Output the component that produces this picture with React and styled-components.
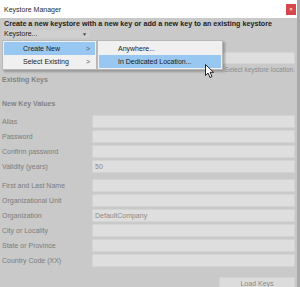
import React from "react";
import styled, { createGlobalStyle } from "styled-components";

const GlobalStyle = createGlobalStyle`
  html, body {
    margin: 0;
    padding: 0;
    background: #c9c9c9;
  }
  body {
    font-family: "Liberation Sans", Arial, sans-serif;
    font-size: 7px;
  }
`;

const Window = styled.div`
  position: relative;
  width: 297px;
  height: 287px;
  overflow: hidden;
  background: #c9c9c9;
  border-right: 3px solid #a9a9a9;
  display: flex;
  flex-direction: column;
`;

const TitleBar = styled.div`
  height: 18px;
  flex: none;
  background: #ffffff;
  display: flex;
  align-items: center;
  justify-content: space-between;
  padding: 0 1px 0 4px;
  color: #2b2b2b;
  font-size: 7px;
`;

const CloseButton = styled.div`
  width: 10px;
  height: 11px;
  background: #d5474b;
  color: #ffffff;
  font-size: 6px;
  display: flex;
  align-items: center;
  justify-content: center;
`;

const Content = styled.div`
  display: flex;
  flex-direction: column;
  padding: 0 2px;
`;

const Heading = styled.div`
  line-height: 12px;
  font-size: 7.2px;
  font-weight: bold;
  color: #1c1c1c;
  padding-left: 2px;
  white-space: nowrap;
`;

const Dropdown = styled.div`
  width: 88px;
  height: 8px;
  line-height: 8px;
  background: #cfcfcf;
  color: #222;
  display: flex;
  justify-content: space-between;
  padding: 0 3px 0 2px;
  box-sizing: border-box;
`;

const Arrow = styled.span`
  font-size: 5px;
  color: #444;
`;

const Grid = styled.div`
  display: grid;
  grid-template-columns: 90px 1fr;
  row-gap: 2px;
  margin-top: ${(p) => p.$top || 0}px;
`;

const Label = styled.div`
  color: #7c7c7c;
  display: flex;
  align-items: center;
  white-space: nowrap;
`;

const Field = styled.div`
  height: ${(p) => p.$h || 13}px;
  background: #dedede;
  border: 1px solid #d3d3d3;
  border-radius: 1px;
  box-sizing: border-box;
  color: #8a8a8a;
  padding-left: 2px;
  display: flex;
  align-items: center;
`;

const Spacer = styled.div`
  grid-column: 1 / -1;
  height: ${(p) => p.$h}px;
`;

const HelpText = styled.div`
  text-align: right;
  font-size: 6.5px;
  line-height: 11px;
  color: #8c8c8c;
`;

const Section = styled.div`
  font-weight: bold;
  color: #828282;
  line-height: 10px;
  margin-top: ${(p) => p.$top || 0}px;
`;

const Footer = styled.div`
  display: flex;
  justify-content: flex-end;
  margin-top: 10px;
`;

const Button = styled.div`
  width: 76px;
  height: 12px;
  background: #dcdcdc;
  border: 1px solid #d3d3d3;
  box-sizing: border-box;
  color: #8a8a8a;
  display: flex;
  align-items: center;
  justify-content: center;
`;

const Menu = styled.div`
  position: absolute;
  top: 40px;
  left: ${(p) => p.$left}px;
  width: ${(p) => p.$width}px;
  padding: 1px;
  background: #f0f0f0;
  border: 1px solid #b8b8b8;
  box-sizing: border-box;
  box-shadow: 2px 2px 2px rgba(0, 0, 0, 0.25);
`;

const MenuItem = styled.div`
  height: 13px;
  display: flex;
  align-items: center;
  justify-content: space-between;
  padding: 0 5px 0 19px;
  color: #1a1a1a;
  background: ${(p) => (p.$active ? "#98c8f2" : "transparent")};
`;

const Chevron = styled.span`
  color: #555;
  font-size: 7px;
`;

const Cursor = styled.svg`
  position: absolute;
  left: 205px;
  top: 64px;
`;

const rowsA = [
  ["Alias", ""],
  ["Password", ""],
  ["Confirm password", ""],
  ["Validity (years)", "50"],
];

const rowsB = [
  ["First and Last Name", ""],
  ["Organizational Unit", ""],
  ["Organization", "DefaultCompany"],
  ["City or Locality", ""],
  ["State or Province", ""],
  ["Country Code (XX)", ""],
];

export default function App() {
  return (
    <>
      <GlobalStyle />
      <Window>
        <TitleBar>
          <span>Keystore Manager</span>
          <CloseButton>×</CloseButton>
        </TitleBar>
        <Content>
          <Heading>
            Create a new keystore with a new key or add a new key to an existing keystore
          </Heading>
          <Dropdown>
            <span>Keystore...</span>
            <Arrow>▼</Arrow>
          </Dropdown>
          <Grid $top={14}>
            <Label />
            <Field $h={12} />
          </Grid>
          <HelpText>Select keystore location.</HelpText>
          <Section>Existing Keys</Section>
          <Section $top={14}>New Key Values</Section>
          <Grid $top={6}>
            {rowsA.map(([label, value]) => (
              <React.Fragment key={label}>
                <Label>{label}</Label>
                <Field>{value}</Field>
              </React.Fragment>
            ))}
            <Spacer $h={2} />
            {rowsB.map(([label, value]) => (
              <React.Fragment key={label}>
                <Label>{label}</Label>
                <Field>{value}</Field>
              </React.Fragment>
            ))}
          </Grid>
          <Footer>
            <Button>Load Keys</Button>
          </Footer>
        </Content>

        <Menu $left={2} $width={95}>
          <MenuItem $active>
            <span>Create New</span>
            <Chevron>&gt;</Chevron>
          </MenuItem>
          <MenuItem>
            <span>Select Existing</span>
            <Chevron>&gt;</Chevron>
          </MenuItem>
        </Menu>
        <Menu $left={97} $width={126}>
          <MenuItem>
            <span>Anywhere...</span>
          </MenuItem>
          <MenuItem $active>
            <span>In Dedicated Location...</span>
          </MenuItem>
        </Menu>

        <Cursor width="10" height="15" viewBox="0 0 10 15">
          <path
            d="M0.5 0.5 L0.5 11.5 L3 9 L5 13.5 L7 12.6 L5.1 8.3 L8.5 8.3 Z"
            fill="#ffffff"
            stroke="#111111"
            strokeWidth="0.9"
            strokeLinejoin="round"
          />
        </Cursor>
      </Window>
    </>
  );
}
